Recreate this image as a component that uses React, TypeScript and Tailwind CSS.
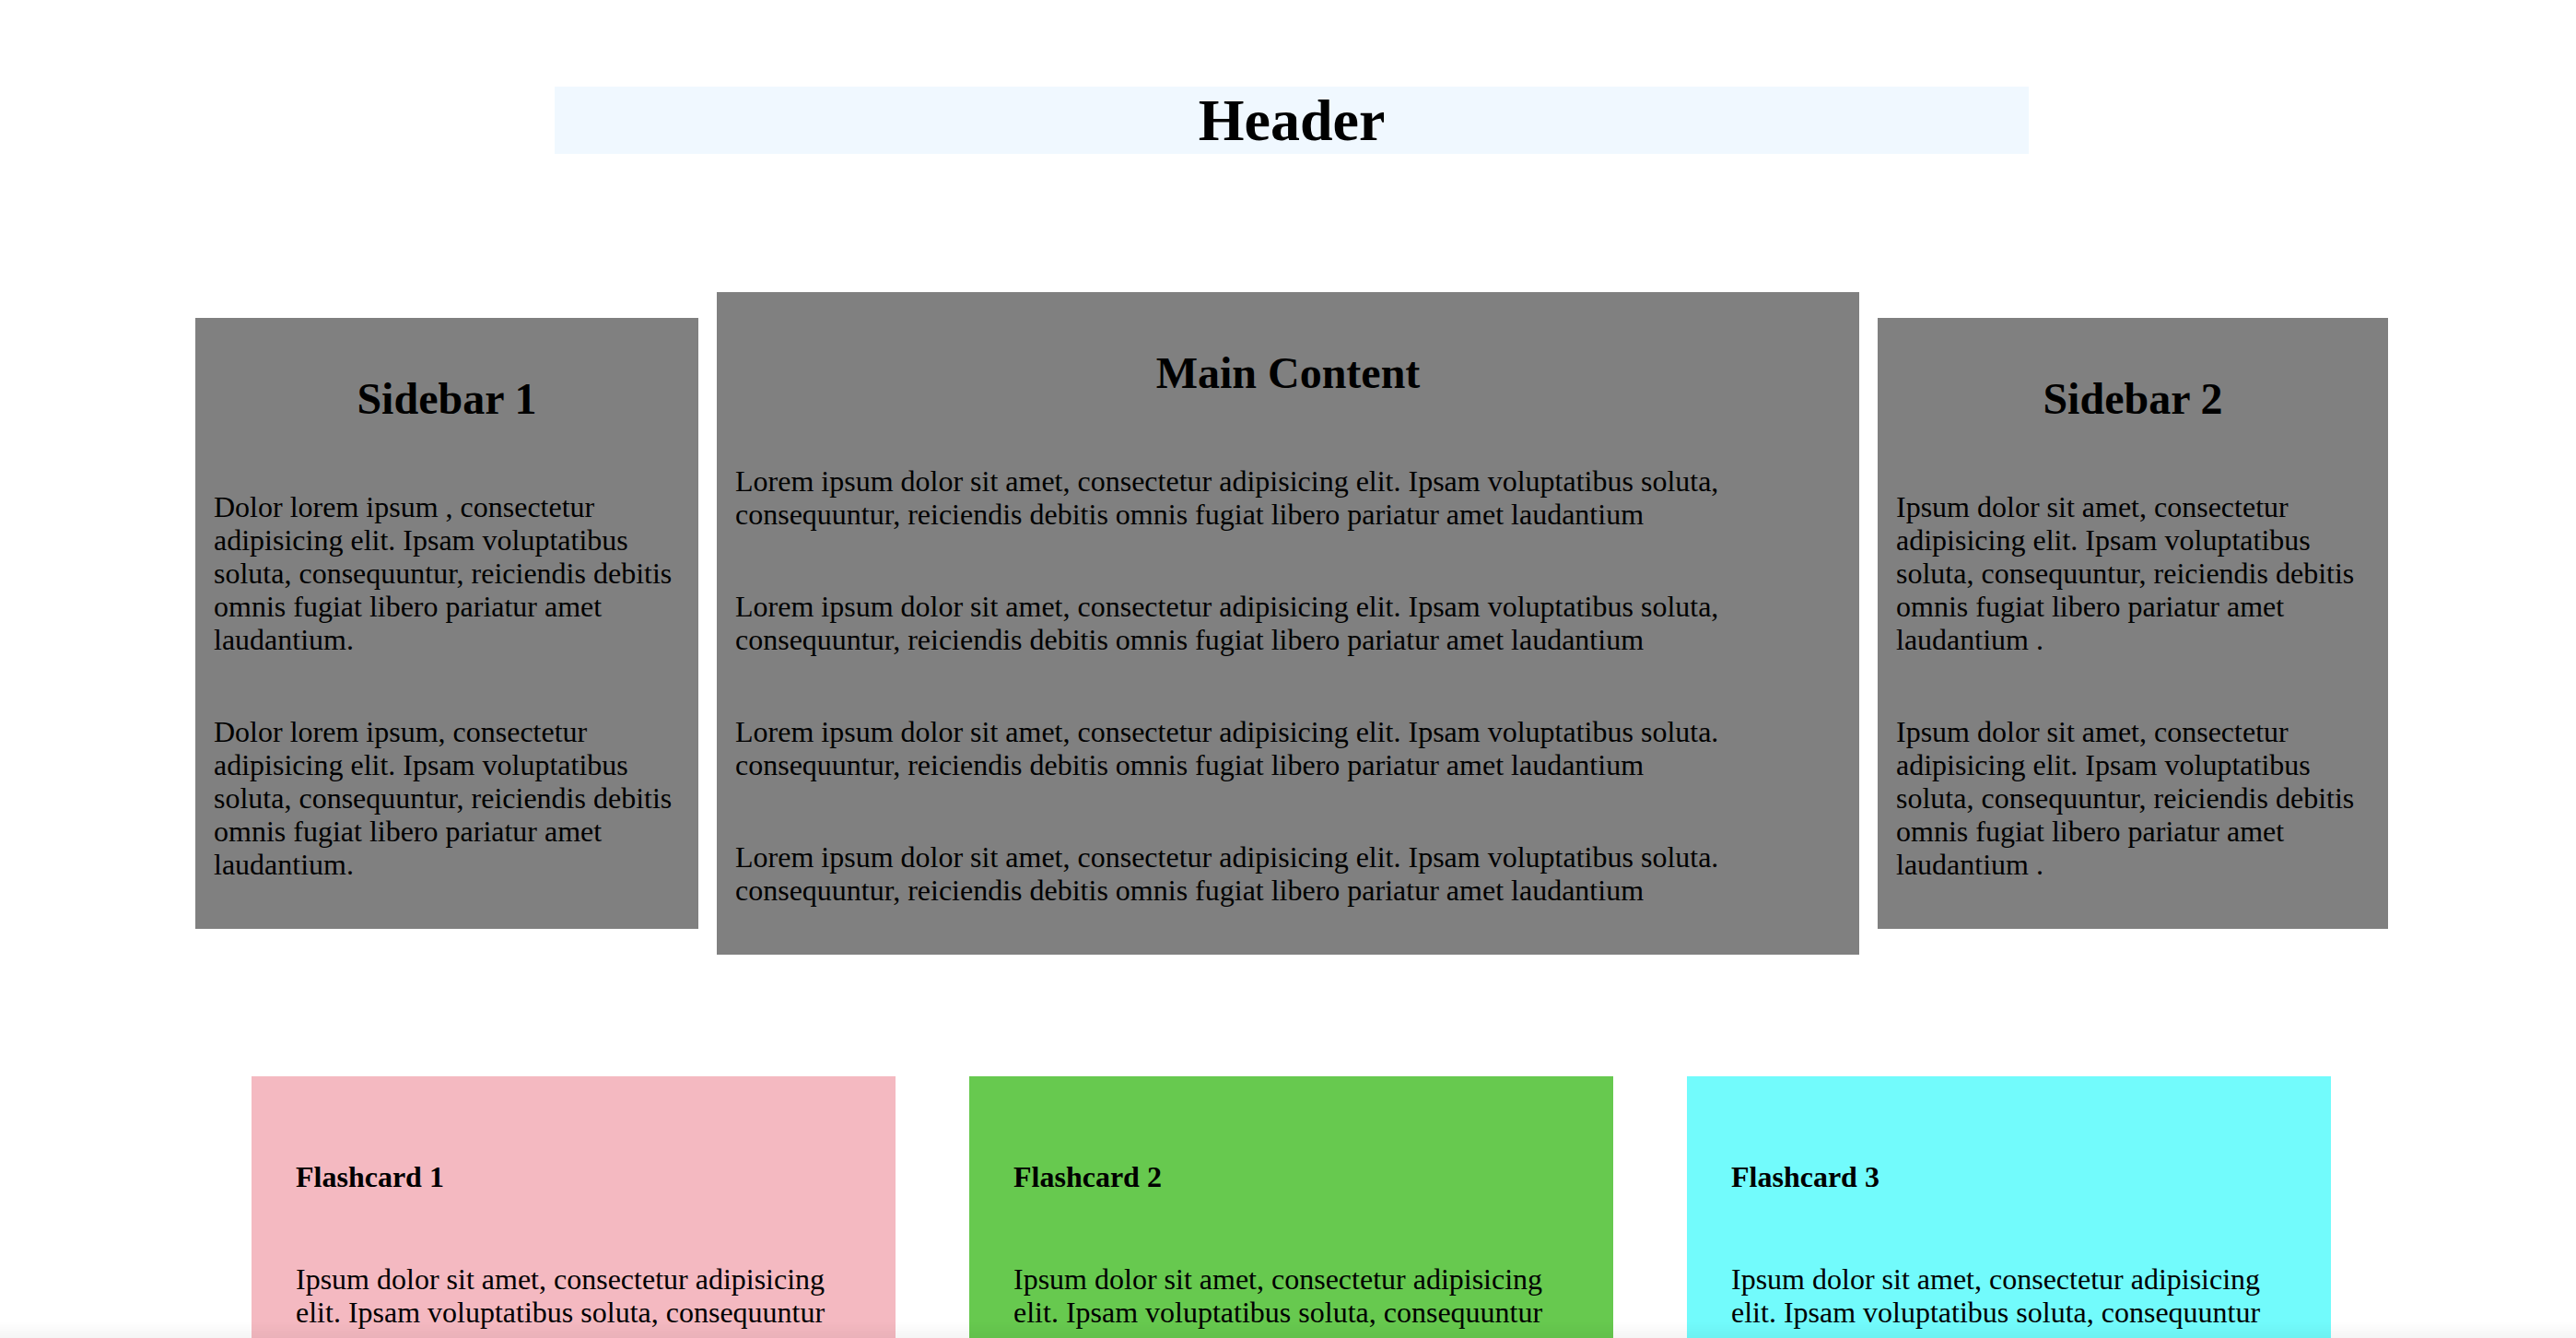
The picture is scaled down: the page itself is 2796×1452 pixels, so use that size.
const lorem =
  "Lorem ipsum dolor sit amet, consectetur adipisicing elit. Ipsam voluptatibus soluta, consequuntur, reiciendis debitis omnis fugiat libero pariatur amet laudantium";
const loremDot =
  "Lorem ipsum dolor sit amet, consectetur adipisicing elit. Ipsam voluptatibus soluta. consequuntur, reiciendis debitis omnis fugiat libero pariatur amet laudantium";
const side2 =
  "Ipsum dolor sit amet, consectetur adipisicing elit. Ipsam voluptatibus soluta, consequuntur, reiciendis debitis omnis fugiat libero pariatur amet laudantium .";
const cardText = "Ipsum dolor sit amet, consectetur adipisicing elit. Ipsam voluptatibus soluta, consequuntur";

function Panel({ title, paras, width }: { title: string; paras: string[]; width: string }) {
  return (
    <div className={`flex flex-col bg-[#808080] p-[20px] ${width}`}>
      <h2 className="my-[40px] text-center text-[48px] font-bold leading-[55px]">{title}</h2>
      {paras.map((p, i) => (
        <p key={i} className="my-[32px] text-[32px] leading-[36px]">
          {p}
        </p>
      ))}
    </div>
  );
}

function Flashcard({ title, color }: { title: string; color: string }) {
  return (
    <div className={`flex w-[699px] shrink-0 flex-col px-[48px] pt-[48px] pb-[48px] ${color}`}>
      <h4 className="my-[43px] text-[32px] font-bold leading-[36px]">{title}</h4>
      <p className="my-[32px] text-[32px] leading-[36px]">{cardText}</p>
    </div>
  );
}

export default function App() {
  return (
    <div
      className="relative min-h-screen w-full bg-white pt-[94px] pb-[80px] text-black"
      style={{ fontFamily: '"Liberation Serif", "Times New Roman", serif' }}
    >
      <div className="pl-[602px]">
        <h1 className="m-0 w-[1600px] bg-[#f0f8ff] text-center text-[64px] font-bold leading-[73px]">Header</h1>
      </div>

      <div className="mt-[150px] flex items-center gap-[20px] pl-[212px]">
        <Panel
          title="Sidebar 1"
          width="w-[546px]"
          paras={[
            "Dolor lorem ipsum , consectetur adipisicing elit. Ipsam voluptatibus soluta, consequuntur, reiciendis debitis omnis fugiat libero pariatur amet laudantium.",
            "Dolor lorem ipsum, consectetur adipisicing elit. Ipsam voluptatibus soluta, consequuntur, reiciendis debitis omnis fugiat libero pariatur amet laudantium.",
          ]}
        />
        <Panel title="Main Content" width="w-[1240px]" paras={[lorem, lorem, loremDot, loremDot]} />
        <Panel title="Sidebar 2" width="w-[554px]" paras={[side2, side2]} />
      </div>

      <div className="mt-[132px] flex gap-[80px] pl-[273px]">
        <Flashcard title="Flashcard 1" color="bg-[#f4b9c1]" />
        <Flashcard title="Flashcard 2" color="bg-[#67c94f]" />
        <Flashcard title="Flashcard 3" color="bg-[#72fbfc]" />
      </div>

      <div className="pointer-events-none fixed inset-x-0 bottom-0 h-[18px] bg-gradient-to-b from-transparent to-black/[0.04]" />
    </div>
  );
}
